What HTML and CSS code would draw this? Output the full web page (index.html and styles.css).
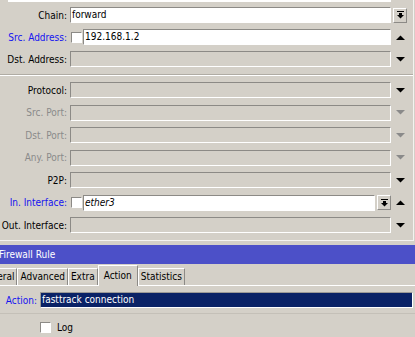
FILE: index.html
```html
<!DOCTYPE html>
<html lang="en">
  <head>
    <meta charset="UTF-8" />
    <title>Firewall Rule</title>
    <link rel="stylesheet" href="styles.css">
  </head>
  <body>
    <div class="win-top">
      <div class="prev-field"></div>

      <div class="row">
        <span class="lbl">Chain:</span>
        <div class="field on">forward</div>
        <span class="side"><span class="btn"><svg width="7" height="8" viewBox="0 0 7 8"><rect x="0" y="0" width="7" height="1"/><rect x="2" y="2" width="3" height="2"/><polygon points="0,4 7,4 3.5,7.5"/></svg></span></span>
      </div>
      <div class="row">
        <span class="lbl blue">Src. Address:</span>
        <span class="chk"></span>
        <div class="field on short">192.168.1.2</div>
        <span class="side"><svg class="arrow" width="9" height="5" viewBox="0 0 9 5"><polygon points="0,5 4.5,0.5 9,5"/></svg></span>
      </div>
      <div class="row">
        <span class="lbl">Dst. Address:</span>
        <div class="field"></div>
        <span class="side"><svg class="arrow" width="9" height="5" viewBox="0 0 9 5"><polygon points="0,0 9,0 4.5,4.5"/></svg></span>
      </div>

      <div class="sep"></div>

      <div class="row tall">
        <span class="lbl">Protocol:</span>
        <div class="field"></div>
        <span class="side"><svg class="arrow" width="9" height="5" viewBox="0 0 9 5"><polygon points="0,0 9,0 4.5,4.5"/></svg></span>
      </div>
      <div class="row tall">
        <span class="lbl dim">Src. Port:</span>
        <div class="field"></div>
        <span class="side"><svg class="arrow dim" width="9" height="5" viewBox="0 0 9 5"><polygon points="0,0 9,0 4.5,4.5"/></svg></span>
      </div>
      <div class="row tall">
        <span class="lbl dim">Dst. Port:</span>
        <div class="field"></div>
        <span class="side"><svg class="arrow dim" width="9" height="5" viewBox="0 0 9 5"><polygon points="0,0 9,0 4.5,4.5"/></svg></span>
      </div>
      <div class="row tall">
        <span class="lbl dim">Any. Port:</span>
        <div class="field"></div>
        <span class="side"><svg class="arrow dim" width="9" height="5" viewBox="0 0 9 5"><polygon points="0,0 9,0 4.5,4.5"/></svg></span>
      </div>
      <div class="row tall">
        <span class="lbl">P2P:</span>
        <div class="field"></div>
        <span class="side"><svg class="arrow" width="9" height="5" viewBox="0 0 9 5"><polygon points="0,0 9,0 4.5,4.5"/></svg></span>
      </div>
      <div class="row tall">
        <span class="lbl blue">In. Interface:</span>
        <span class="chk"></span>
        <div class="field on shorter"><i>ether3</i></div>
        <span class="btn"><svg width="7" height="8" viewBox="0 0 7 8"><rect x="0" y="0" width="7" height="1"/><rect x="2" y="2" width="3" height="2"/><polygon points="0,4 7,4 3.5,7.5"/></svg></span>
        <span class="side"><svg class="arrow" width="9" height="5" viewBox="0 0 9 5"><polygon points="0,5 4.5,0.5 9,5"/></svg></span>
      </div>
      <div class="row tall">
        <span class="lbl">Out. Interface:</span>
        <div class="field"></div>
        <span class="side"><svg class="arrow" width="9" height="5" viewBox="0 0 9 5"><polygon points="0,0 9,0 4.5,4.5"/></svg></span>
      </div>
    </div>

    <div class="win-bottom">
      <div class="titlebar">Firewall Rule</div>
      <div class="tabs">
        <span class="tab cut">General</span>
        <span class="tab">Advanced</span>
        <span class="tab">Extra</span>
        <span class="tab active">Action</span>
        <span class="tab">Statistics</span>
      </div>
      <div class="panel">
        <div class="action-row">
          <span class="action-lbl">Action:</span>
          <div class="action-field">fasttrack connection</div>
        </div>
        <div class="rule"></div>
        <div class="log-row">
          <span class="chk"></span>
          <span>Log</span>
        </div>
      </div>
    </div>
  </body>
</html>
```

FILE: styles.css
```css
body {
  font-family: "DejaVu Sans Condensed", "DejaVu Sans", "Liberation Sans", sans-serif;
  font-stretch: condensed;
  font-size: 10px;
  background-color: #d4d0c8;
  color: #000;
  margin: 0;
  padding: 0;
  width: 415px;
  height: 337px;
  overflow: hidden;
}

.win-top {
  width: 414px;
  height: 241px;
  box-sizing: border-box;
  border-right: 1px solid #f4f3f0;
  border-bottom: 1px solid #f4f3f0;
}

.prev-field {
  margin-left: 8px;
  width: 383px;
  height: 2px;
  background-color: #fff;
  margin-bottom: 2px;
}

.row {
  display: flex;
  align-items: center;
  height: 22px;
}

.row.tall {
  height: 22.5px;
}

.sep {
  height: 1px;
  margin: 4px 0 3px;
  background-color: #b0aca4;
  border-bottom: 1px solid #fff;
}

.lbl {
  width: 67px;
  margin-right: 3px;
  text-align: right;
  white-space: nowrap;
}

.blue {
  color: #1414f0;
}

.dim {
  color: #8a8a8a;
}

.field {
  width: 321px;
  height: 16px;
  box-sizing: border-box;
  border: 1px solid;
  border-color: #8c8a86 #fff #fff #8c8a86;
  background-color: #d4d0c8;
  padding-left: 1px;
  line-height: 14px;
  white-space: nowrap;
}

.field.on {
  background-color: #fff;
}

.field.short {
  width: 308px;
}

.field.shorter {
  width: 292px;
}

.chk {
  width: 11px;
  height: 11px;
  box-sizing: border-box;
  border: 1px solid;
  border-color: #8c8a86 #fff #fff #8c8a86;
  background-color: #fff;
  margin: 0 1px;
}

.side {
  width: 22px;
  display: flex;
  align-items: center;
}

.arrow {
  margin-left: 5px;
  fill: #000;
}

.arrow.dim {
  fill: #8a8a8a;
}

.btn {
  width: 14px;
  height: 15px;
  box-sizing: border-box;
  margin-left: 2px;
  border: 1px solid;
  border-color: #fff #8c8a86 #8c8a86 #fff;
  display: flex;
  align-items: center;
  justify-content: center;
}

.win-bottom {
  margin-top: 4px;
}

.titlebar {
  height: 19px;
  background-color: #4c50c8;
  color: #fff;
  line-height: 19px;
  margin-left: -1px;
  white-space: nowrap;
}

.tabs {
  display: flex;
  align-items: flex-end;
  height: 21px;
  white-space: nowrap;
}

.tab {
  height: 17px;
  line-height: 16px;
  padding: 0 2px;
  box-sizing: border-box;
  border-top: 1px solid #fff;
  border-left: 1px solid #fff;
  border-right: 1px solid #8c8a86;
}

.tab.cut {
  margin-left: -24px;
}

.tab.active {
  position: relative;
  height: 21px;
  line-height: 19px;
  margin-bottom: -1px;
  background-color: #d4d0c8;
  padding: 0 5px;
}

.panel {
  border-top: 1px solid #fff;
}

.action-row {
  display: flex;
  align-items: center;
  margin-top: 6px;
}

.action-lbl {
  width: 37px;
  margin-right: 3px;
  text-align: right;
  color: #1414f0;
}

.action-field {
  width: 373px;
  height: 16px;
  box-sizing: border-box;
  border: 1px solid;
  border-color: #9c9a96 #fff #fff #9c9a96;
  background-color: #0a2266;
  color: #fff;
  padding-left: 1px;
  line-height: 14px;
}

.rule {
  height: 1px;
  margin-top: 5px;
  background-color: #c4c0b8;
}

.log-row {
  display: flex;
  align-items: center;
  gap: 5px;
  margin-top: 8px;
  padding-left: 39px;
}
```
